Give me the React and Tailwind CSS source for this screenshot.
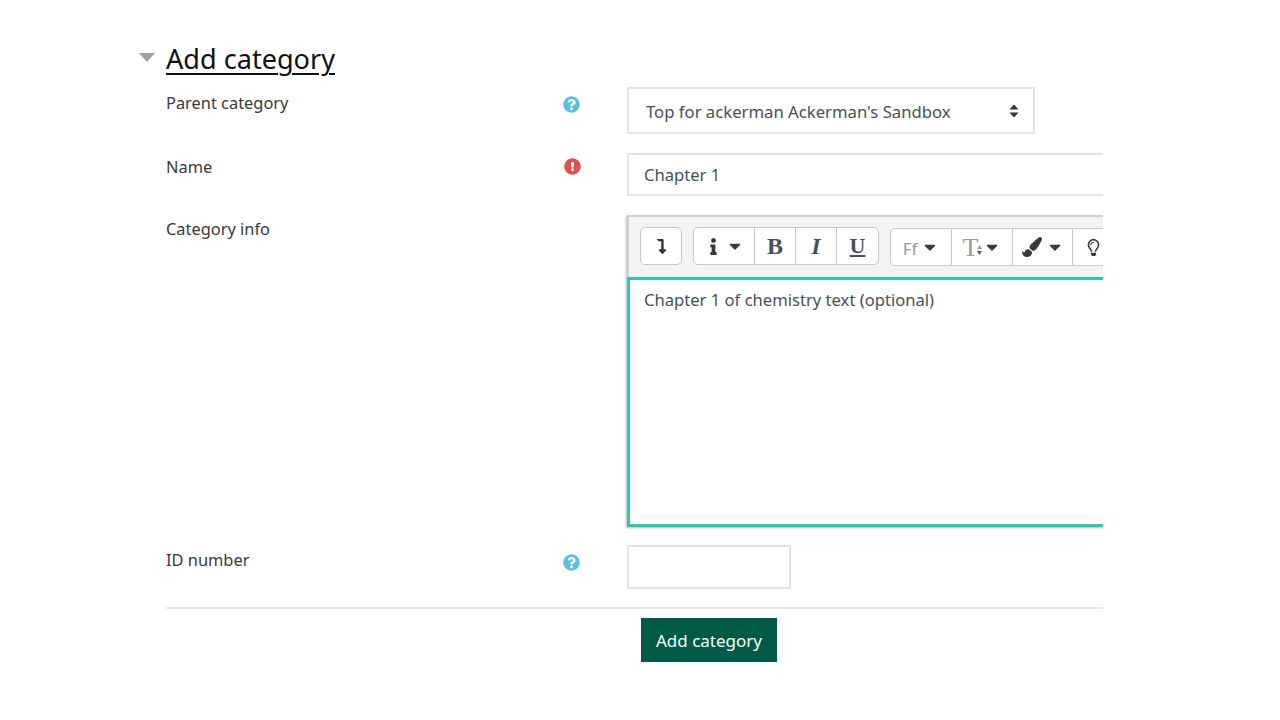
import React from "react";
import { FaQuestionCircle, FaExclamationCircle, FaCaretDown, FaLevelDownAlt, FaInfo, FaPaintBrush, FaRegLightbulb } from "react-icons/fa";

function Row({ label, icon, className = "", labelClass = "", children }) {
  return (
    <div className={"flex items-start " + className}>
      <div className={"w-[398px] shrink-0 text-[16.4px] text-[#373a3c] " + labelClass}>{label}</div>
      <div className="w-[63px] shrink-0 pt-[8px]">{icon}</div>
      <div className="min-w-0 flex-1">{children}</div>
    </div>
  );
}

const Caret = ({ className = "" }) => <FaCaretDown className={"text-[#373a3c] text-[18px] " + className} />;

function Tool({ children, className = "" }) {
  return <div className={"flex h-full shrink-0 items-center justify-center gap-[4px] border-r border-[#c8c8c8] " + className}>{children}</div>;
}

export default function App() {
  return (
    <div className="h-[720px] w-[1280px] overflow-hidden bg-white font-['Noto_Sans','Open_Sans',sans-serif] text-[16.6px] leading-[24px] text-[#495057]">
      <div className="ml-[139px] w-[964px] overflow-hidden pt-[42px]">
        <div className="flex items-start">
          <svg width="16" height="9" viewBox="0 0 16 9" className="mt-[11px] shrink-0">
            <path d="M0 0H16L8 9Z" fill="#a0a0a0" />
          </svg>
          <h2 className="ml-[11px] text-[27.1px] leading-[34px] text-[#111] underline decoration-[1.5px] underline-offset-[4px]">Add category</h2>
        </div>

        <div className="ml-[27px] mt-[11px]">
          <Row label="Parent category" labelClass="pt-[4px]" icon={<FaQuestionCircle className="ml-[-1px] mt-[1px] text-[17px] text-[#5bc0de]" />}>
            <div className="flex h-[47px] w-[408px] items-center justify-between border-2 border-[#e1e4e8] pl-[17px] pr-[14px]">
              <span className="mt-[2px] text-[16.7px]">Top for ackerman Ackerman's Sandbox</span>
              <svg width="10" height="14" viewBox="0 0 10 14"><path d="M5 0.5L9.5 5.5H0.5ZM5 13.5L0.5 8.5H9.5Z" fill="#333" /></svg>
            </div>
          </Row>

          <Row className="mt-[19px]" label="Name" labelClass="pt-[2px]" icon={<FaExclamationCircle className="mt-[-3px] text-[17px] text-[#d9534f]" />}>
            <div className="flex h-[43px] w-[600px] items-center border-2 border-[#e1e4e8] pl-[15px]">Chapter 1</div>
          </Row>

          <Row className="mt-[19px]" label="Category info" labelClass="pt-[2px]">
            <div className="w-[600px] shadow-[-1px_1px_2px_#bbb]">
              <div className="flex h-[62px] items-start border-2 border-b-0 border-[#d0d0d0] bg-[#f3f3f3] pl-[11px] pt-[10px]">
                <div className="flex h-[38px] w-[42px] items-center justify-center rounded-[5px] border border-[#c8c8c8] bg-white">
                  <FaLevelDownAlt className="text-[15px] text-[#333]" />
                </div>
                <div className="ml-[11px] flex h-[38px] items-center rounded-[5px] border border-[#c8c8c8] bg-white">
                  <Tool className="w-[61px]"><FaInfo className="text-[17px] text-[#373a3c]" /><Caret /></Tool>
                  <Tool className="w-[41px] font-['Liberation_Serif',serif] text-[24px] font-bold text-[#4a5058]">B</Tool>
                  <Tool className="w-[41px] font-['Liberation_Serif',serif] text-[24px] font-bold italic text-[#4a5058]">I</Tool>
                  <div className="flex h-full w-[41px] items-center justify-center font-['Liberation_Serif',serif] text-[22px] font-bold text-[#4a5058] underline">U</div>
                </div>
                <div className="ml-[11px] mt-[1px] flex h-[38px] items-center rounded-l-[5px] border border-[#c8c8c8] bg-white">
                  <Tool className="w-[61px] text-[17px] text-[#999]"><span className="mt-[3px]">Ff</span><Caret /></Tool>
                  <Tool className="w-[61px]">
                    <span className="mt-[2px] font-['Liberation_Serif',serif] text-[26px] text-[#999]">T</span>
                    <span className="ml-[-5px] mt-[5px] flex flex-col gap-[2px]">
                      <svg width="5" height="4" viewBox="0 0 5 4"><path d="M2.5 0L5 4H0Z" fill="#999" /></svg>
                      <svg width="5" height="4" viewBox="0 0 5 4"><path d="M2.5 4L0 0H5Z" fill="#555" /></svg>
                    </span>
                    <Caret className="ml-[-3px]" />
                  </Tool>
                  <Tool className="w-[60px]"><FaPaintBrush className="text-[20px] text-[#373a3c]" /><Caret /></Tool>
                  <div className="flex h-full w-[60px] items-center pl-[12px]"><FaRegLightbulb className="text-[17px] text-[#373a3c]" /></div>
                </div>
              </div>
              <div className="h-[250px] border-[3px] border-r-0 border-[#2bc9b1] pl-[14px] pt-[8px]">Chapter 1 of chemistry text (optional)</div>
            </div>
          </Row>

          <Row className="mt-[18px]" label="ID number" labelClass="pt-[3px]" icon={<FaQuestionCircle className="ml-[-1px] mt-[1px] text-[17px] text-[#5bc0de]" />}>
            <div className="h-[44px] w-[164px] border-2 border-[#e1e4e8]" />
          </Row>

          <hr className="mt-[18px] border-t-2 border-[#e8e8e8]" />
          <div className="mt-[9px] pl-[475px]">
            <button className="h-[44px] w-[136px] bg-[#005a46] pt-[2px] text-[17px] text-white">Add category</button>
          </div>
        </div>
      </div>
    </div>
  );
}
